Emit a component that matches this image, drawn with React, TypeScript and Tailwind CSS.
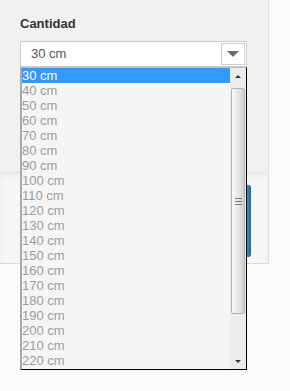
const sizes = [30, 40, 50, 60, 70, 80, 90, 100, 110, 120, 130, 140, 150, 160, 170, 180, 190, 200, 210, 220];

export default function App() {
  return (
    <div className="relative h-[391px] w-[290px] overflow-hidden bg-[#fbfbfb] font-['Liberation_Sans',Arial,sans-serif]">
      <div className="flex h-[264px] w-[269px] flex-col border-r border-b border-[#dcdcdc] bg-[#f1f1f1]">
        <div className="h-[172px] px-5 pt-[16px]">
          <h3 className="text-[13px] font-bold leading-[16px] text-[#333]">Cantidad</h3>
          <div className="mt-[9px] flex h-[26px] w-[227px] items-center justify-between border border-[#cccccc] bg-white pl-[10px] pr-[1px]">
            <span className="text-[13px] text-[#555]">30 cm</span>
            <span className="flex h-[22px] w-[24px] items-center justify-center border border-[#cfcfcf] bg-white">
              <span className="h-0 w-0 border-x-[6px] border-t-[6px] border-x-transparent border-t-[#6b6b6b]" />
            </span>
          </div>
        </div>
        <div className="flex flex-1 items-start justify-end border-t border-[#e4e4e4] bg-[#f6f6f6] pt-[12px] pr-[17px] shadow-[inset_0_3px_4px_rgba(0,0,0,0.04)]">
          <div className="h-[72px] w-[60px] rounded-[3px] border-r-2 border-[#1f6f95] bg-[#2a8ac0]" />
        </div>
      </div>

      {/* open option list */}
      <div className="absolute top-[67px] left-[20px] flex h-[303px] w-[227px] border-t border-l-2 border-r border-b border-t-[#bdbdbd] border-l-[#a9a9a9] border-r-black border-b-black bg-[#f5f5f5]">
        <ul className="flex-1">
          {sizes.map((s, i) => (
            <li
              key={s}
              className={
                i === 0
                  ? "h-[15px] bg-[#3399ff] text-[13px] leading-[15px] text-white"
                  : "h-[15px] text-[13px] leading-[15px] text-[#9c9c9c]"
              }
            >
              {s} cm
            </li>
          ))}
        </ul>
        <div className="flex w-[16px] flex-col items-center bg-[#ececec]">
          <div className="flex h-[16px] w-full items-center justify-center">
            <span className="h-0 w-0 border-x-[3px] border-b-[3px] border-x-transparent border-b-[#333]" />
          </div>
          <div className="mt-[4px] flex h-[226px] w-[14px] flex-col items-center justify-center gap-[2px] rounded-[2px] border border-[#b5b5b5] bg-gradient-to-r from-[#fafafa] via-[#e8e8e8] to-[#cfcfcf]">
            <span className="h-px w-[7px] bg-[#777]" />
            <span className="h-px w-[7px] bg-[#777]" />
            <span className="h-px w-[7px] bg-[#777]" />
          </div>
          <div className="flex-1" />
          <div className="flex h-[16px] w-full items-center justify-center">
            <span className="h-0 w-0 border-x-[3px] border-t-[3px] border-x-transparent border-t-[#333]" />
          </div>
        </div>
      </div>
    </div>
  );
}
